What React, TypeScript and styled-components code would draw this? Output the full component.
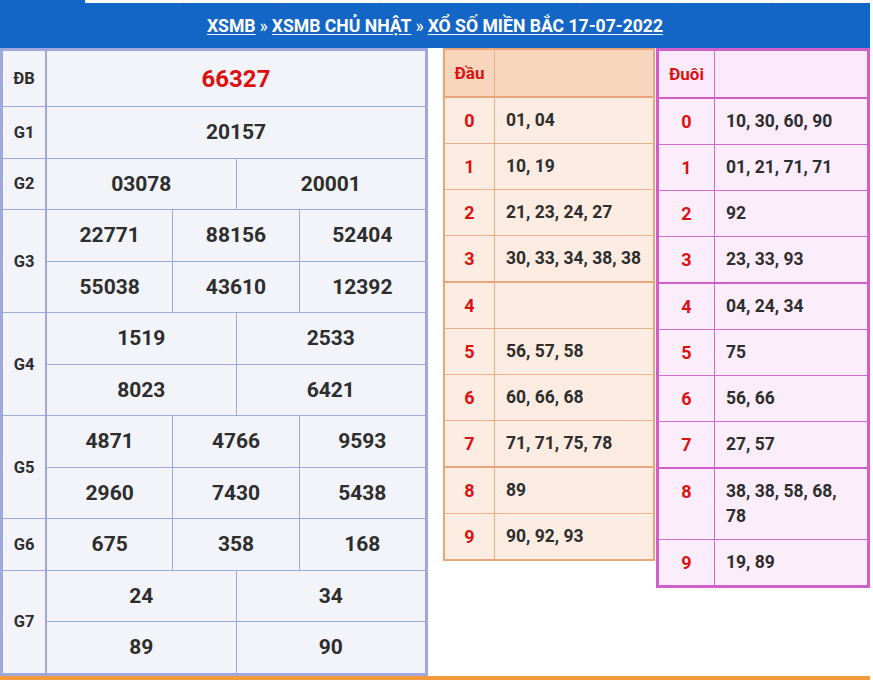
import React from "react";
import styled, { createGlobalStyle } from "styled-components";

const Global = createGlobalStyle`
  html, body { margin: 0; padding: 0; background: #fff; }
  body { font-family: Roboto, "Noto Sans", Arial, sans-serif; color: #2e2e2e; }
  * { box-sizing: border-box; }
`;

const Page = styled.div`
  width: 870px;
  display: flex;
  flex-direction: column;
`;

const TopStrip = styled.div`
  height: 3px;
  display: flex;
  gap: 1px;
  background: #eef0f4;
`;

const StripBlue = styled.div`
  width: 85px;
  background: #1466c6;
`;

const StripTab = styled.div`
  flex: 1;
  background: #ffffff;
`;

const Header = styled.div`
  height: 45px;
  background: #1466c6;
  display: flex;
  align-items: center;
  justify-content: center;
  gap: 4px;
  color: #fff;
  font-weight: 700;
  font-size: 17.6px;
`;

const Crumb = styled.a`
  color: #fff;
  text-decoration: underline;
  text-underline-offset: 2px;
`;

const Sep = styled.span`
  color: #fff;
  font-weight: 400;
`;

const Main = styled.div`
  display: flex;
  align-items: flex-start;
`;

const LeftTable = styled.div`
  width: 428px;
  border: 3px solid #9fa8da;
  background: #9fa8da;
  display: flex;
  flex-direction: column;
  gap: 1px;
`;

const PrizeRow = styled.div`
  display: grid;
  grid-template-columns: 42px 1fr;
  column-gap: 2px;
`;

const Label = styled.div`
  background: #f3f4f9;
  display: flex;
  align-items: center;
  justify-content: center;
  font-weight: 700;
  font-size: 16.5px;
  color: #2e2e2e;
`;

const Values = styled.div<{ $cols: number }>`
  display: grid;
  grid-template-columns: repeat(${(p) => p.$cols}, 1fr);
  gap: 1px;
`;

const Num = styled.div<{ $special?: boolean }>`
  background: #f3f4f9;
  height: ${(p) => (p.$special ? "55px" : "50.5px")};
  display: flex;
  align-items: center;
  justify-content: center;
  font-weight: 700;
  font-size: ${(p) => (p.$special ? "24px" : "21px")};
  color: ${(p) => (p.$special ? "#e00f0f" : "#2e2e2e")};
`;

const Tail = styled.div<{ $border: string; $bw: number; $bg: string; $ml: number }>`
  margin-left: ${(p) => p.$ml}px;
  width: ${(p) => (p.$bw === 3 ? 214 : 212)}px;
  border: ${(p) => p.$bw}px solid ${(p) => p.$border};
  background: ${(p) => p.$bg};
  display: flex;
  flex-direction: column;
`;

const TRow = styled.div<{ $key: number; $line: string; $bottom: number; $bg?: string }>`
  display: grid;
  grid-template-columns: ${(p) => p.$key}px 1fr;
  border-bottom: ${(p) => p.$bottom}px solid ${(p) => p.$line};
  background: ${(p) => p.$bg || "transparent"};
`;

const KeyCell = styled.div<{ $line: string; $head?: boolean }>`
  border-right: 1px solid ${(p) => p.$line};
  padding: ${(p) => (p.$head ? "11px 0 10px" : "10px 0")};
  text-align: center;
  color: #dd1111;
  font-weight: 700;
  font-size: ${(p) => (p.$head ? "17px" : "18px")};
  line-height: 25px;
`;

const ValCell = styled.div`
  padding: 10px 8px 10px 11px;
  font-weight: 700;
  font-size: 17.5px;
  line-height: 25px;
  color: #2e2e2e;
`;

const BottomBar = styled.div`
  height: 5px;
  background: #f39b3a;
`;

type Prize = { label: string; cols: number; nums: string[]; special?: boolean };

const prizes: Prize[] = [
  { label: "ĐB", cols: 1, nums: ["66327"], special: true },
  { label: "G1", cols: 1, nums: ["20157"] },
  { label: "G2", cols: 2, nums: ["03078", "20001"] },
  { label: "G3", cols: 3, nums: ["22771", "88156", "52404", "55038", "43610", "12392"] },
  { label: "G4", cols: 2, nums: ["1519", "2533", "8023", "6421"] },
  { label: "G5", cols: 3, nums: ["4871", "4766", "9593", "2960", "7430", "5438"] },
  { label: "G6", cols: 3, nums: ["675", "358", "168"] },
  { label: "G7", cols: 2, nums: ["24", "34", "89", "90"] },
];

const dau = ["01, 04", "10, 19", "21, 23, 24, 27", "30, 33, 34, 38, 38", "", "56, 57, 58", "60, 66, 68", "71, 71, 75, 78", "89", "90, 92, 93"];
const duoi = ["10, 30, 60, 90", "01, 21, 71, 71", "92", "23, 33, 93", "04, 24, 34", "75", "56, 66", "27, 57", "38, 38, 58, 68, 78", "19, 89"];

type TailProps = {
  title: string;
  items: string[];
  border: string;
  line: string;
  bw: number;
  bg: string;
  headBg: string;
  keyW: number;
  ml: number;
};

function TailTable({ title, items, border, line, bw, bg, headBg, keyW, ml }: TailProps) {
  return (
    <Tail $border={border} $bw={bw} $bg={bg} $ml={ml}>
      <TRow $key={keyW} $line={border} $bottom={2} $bg={headBg}>
        <KeyCell $line={line} $head>
          {title}
        </KeyCell>
        <ValCell />
      </TRow>
      {items.map((v, i) => (
        <TRow
          key={i}
          $key={keyW}
          $line={i === 3 || i === 7 ? border : line}
          $bottom={i === 9 ? 0 : i === 3 || i === 7 ? 2 : 1}
        >
          <KeyCell $line={line}>{i}</KeyCell>
          <ValCell>{v}</ValCell>
        </TRow>
      ))}
    </Tail>
  );
}

export default function App() {
  return (
    <Page>
      <Global />
      <TopStrip>
        <StripBlue />
        <StripTab />
        <StripTab />
        <StripTab />
        <StripTab />
        <StripTab />
        <StripTab />
        <StripTab />
        <StripTab />
      </TopStrip>
      <Header>
        <Crumb href="#">XSMB</Crumb>
        <Sep>»</Sep>
        <Crumb href="#">XSMB CHỦ NHẬT</Crumb>
        <Sep>»</Sep>
        <Crumb href="#">XỔ SỐ MIỀN BẮC 17-07-2022</Crumb>
      </Header>
      <Main>
        <LeftTable>
          {prizes.map((p) => (
            <PrizeRow key={p.label}>
              <Label>{p.label}</Label>
              <Values $cols={p.cols}>
                {p.nums.map((n, i) => (
                  <Num key={i} $special={p.special}>
                    {n}
                  </Num>
                ))}
              </Values>
            </PrizeRow>
          ))}
        </LeftTable>
        <TailTable
          title="Đầu"
          items={dau}
          border="#e9a67a"
          line="#eab08a"
          bw={2}
          bg="#fdece1"
          headBg="#f8d6bd"
          keyW={50}
          ml={15}
        />
        <TailTable
          title="Đuôi"
          items={duoi}
          border="#d05fca"
          line="#d36ccd"
          bw={3}
          bg="#fcedfb"
          headBg="#fbebfa"
          keyW={56}
          ml={1}
        />
      </Main>
      <BottomBar />
    </Page>
  );
}
